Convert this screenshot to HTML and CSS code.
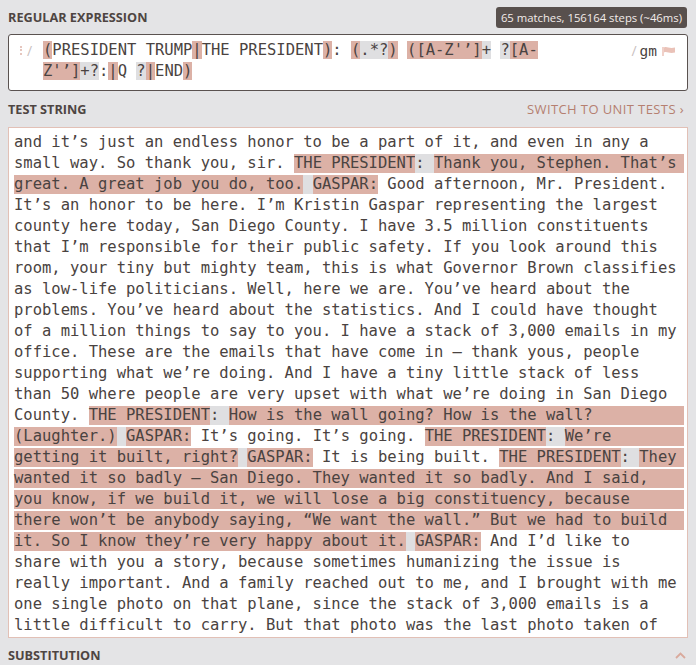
FILE: index.html
```html
<!DOCTYPE html>
<html>
<head>
<meta charset="utf-8">
<link rel="stylesheet" href="styles.css">
</head>
<body>
<div class="app">
  <div class="head head-regex">
    <div class="title">REGULAR EXPRESSION</div>
    <div class="badge">65 matches, 156164 steps (~46ms)</div>
  </div>
  <div class="regex-box">
    <div class="gutter"><span class="grip"></span><span class="delim">/</span></div>
    <div class="regex"><div class="rline"><span class="rg">(</span>PRESIDENT TRUMP<span class="rg">|</span>THE PRESIDENT<span class="rg">)</span>: <span class="rg">(</span><span class="rm">.*?</span><span class="rg">)</span> <span class="rg">([A-Z'’]</span><span class="rm">+</span> <span class="rm">?</span><span class="rg">[A-</span></div><div class="rline"><span class="rg">Z'’]</span><span class="rm">+?</span>:<span class="rg">|</span>Q <span class="rm">?</span><span class="rg">|</span>END<span class="rg">)</span></div></div>
    <div class="flags"><span class="delim">/</span><span class="fl">gm</span><svg class="flag" width="14" height="10" viewBox="0 0 14 10"><path d="M1 1 L1 10" stroke="#e6b3a6" stroke-width="1.2"/><path d="M2 1.5 C5 0 7 3 13 1.5 L13 6.5 C7 8 5 5 2 6.5 Z" fill="#eac2b8"/></svg></div>
  </div>

  <div class="head head-test">
    <div class="title">TEST STRING</div>
    <div class="switch">SWITCH TO UNIT TESTS ›</div>
  </div>

  <div class="test">
    <div class="line"><span>and it’s just an endless honor to be a part of it, and even in any a</span></div>
    <div class="line"><span>small way. So thank you, sir. </span><span class="g">THE PRESIDENT</span><span class="m">: </span><span class="g">Thank you, Stephen. That’s</span><span class="g f"></span></div>
    <div class="line"><span class="g">great. A great job you do, too.</span><span class="m"> </span><span class="g">GASPAR:</span><span> Good afternoon, Mr. President.</span></div>
    <div class="line"><span>It’s an honor to be here. I’m Kristin Gaspar representing the largest</span></div>
    <div class="line"><span>county here today, San Diego County. I have 3.5 million constituents</span></div>
    <div class="line"><span>that I’m responsible for their public safety. If you look around this</span></div>
    <div class="line"><span>room, your tiny but mighty team, this is what Governor Brown classifies</span></div>
    <div class="line"><span>as low-life politicians. Well, here we are. You’ve heard about the</span></div>
    <div class="line"><span>problems. You’ve heard about the statistics. And I could have thought</span></div>
    <div class="line"><span>of a million things to say to you. I have a stack of 3,000 emails in my</span></div>
    <div class="line"><span>office. These are the emails that have come in – thank yous, people</span></div>
    <div class="line"><span>supporting what we’re doing. And I have a tiny little stack of less</span></div>
    <div class="line"><span>than 50 where people are very upset with what we’re doing in San Diego</span></div>
    <div class="line"><span>County. </span><span class="g">THE PRESIDENT</span><span class="m">: </span><span class="g">How is the wall going? How is the wall?</span><span class="g f"></span></div>
    <div class="line"><span class="g">(Laughter.)</span><span class="m"> </span><span class="g">GASPAR:</span><span> It’s going. It’s going. </span><span class="g">THE PRESIDENT</span><span class="m">: </span><span class="g">We’re</span><span class="g f"></span></div>
    <div class="line"><span class="g">getting it built, right?</span><span class="m"> </span><span class="g">GASPAR:</span><span> It is being built. </span><span class="g">THE PRESIDENT</span><span class="m">: </span><span class="g">They</span><span class="g f"></span></div>
    <div class="line"><span class="g">wanted it so badly – San Diego. They wanted it so badly. And I said,</span><span class="g f"></span></div>
    <div class="line"><span class="g">you know, if we build it, we will lose a big constituency, because</span><span class="g f"></span></div>
    <div class="line"><span class="g">there won’t be anybody saying, “We want the wall.” But we had to build</span><span class="g f"></span></div>
    <div class="line"><span class="g">it. So I know they’re very happy about it.</span><span class="m"> </span><span class="g">GASPAR:</span><span> And I’d like to</span></div>
    <div class="line"><span>share with you a story, because sometimes humanizing the issue is</span></div>
    <div class="line"><span>really important. And a family reached out to me, and I brought with me</span></div>
    <div class="line"><span>one single photo on that plane, since the stack of 3,000 emails is a</span></div>
    <div class="line"><span>little difficult to carry. But that photo was the last photo taken of</span></div>
  </div>

  <div class="head head-sub">
    <div class="title">SUBSTITUTION</div>
    <svg class="caret" width="11" height="7" viewBox="0 0 11 7"><path d="M1 6 L5.5 1.5 L10 6" fill="none" stroke="#d9a99c" stroke-width="1.8"/></svg>
  </div>
</div>
</body>
</html>
```

FILE: styles.css
```css
* { box-sizing: border-box; }
html, body { margin: 0; padding: 0; }
body {
  background: #e4e4e6;
  font-family: "Open Sans", sans-serif;
  color: #4a4341;
  width: 696px;
  height: 665px;
  overflow: hidden;
}
.app { padding: 0 8px; }
.head {
  display: flex;
  align-items: center;
  justify-content: space-between;
}
.head-regex { height: 34px; }
.head-test { height: 36px; }
.head-sub { height: 34px; }
.title {
  font-weight: 700;
  font-size: 12.7px;
  color: #4e4542;
}
.badge {
  background: #58504d;
  color: #f3ecea;
  font-size: 11.3px;
  height: 21px;
  line-height: 21px;
  padding: 0 5px;
  border-radius: 3px;
  margin-right: 1px;
}
.regex-box {
  display: flex;
  background: #fff;
  border: 1px solid #5a5250;
  border-radius: 3px;
  padding: 5px 11px 8px 0;
}
.gutter {
  width: 34px;
  height: 21px;
  display: flex;
  align-items: center;
  padding-left: 11px;
  gap: 5px;
}
.grip {
  width: 2px;
  height: 9px;
  border-left: 2px dotted #e6c6be;
}
.delim {
  color: #c9c1bf;
  font-size: 14px;
}
.regex {
  flex: 1;
  font-family: "DejaVu Sans Mono", monospace;
  font-size: 15.5px;
  line-height: 21px;
  white-space: pre;
}
.rg { background: #dcb1a6; }
.rm { background: #dfdfe1; }
.flags {
  display: flex;
  align-items: center;
  height: 21px;
  gap: 3px;
}
.fl {
  font-family: "DejaVu Sans Mono", monospace;
  font-size: 14.5px;
  color: #4a4341;
}
.flag { margin-left: 2px; }
.switch {
  color: #b57f70;
  font-size: 13px;
  letter-spacing: 0.4px;
  margin-right: 4px;
}
.test {
  height: 511px;
  background: #fff;
  border: 1px solid #e2c0b6;
  padding: 4px 3px 0 5px;
  overflow: hidden;
  font-family: "DejaVu Sans Mono", monospace;
  font-size: 15.5px;
}
.line {
  display: flex;
  align-items: center;
  height: 21px;
  white-space: pre;
}
.line span { line-height: 19px; height: 19px; }
.g { background: #dcb1a6; }
.m { background: #dfdfe1; }
.f { flex: 1; }
.caret { margin-right: 2px; }
```
